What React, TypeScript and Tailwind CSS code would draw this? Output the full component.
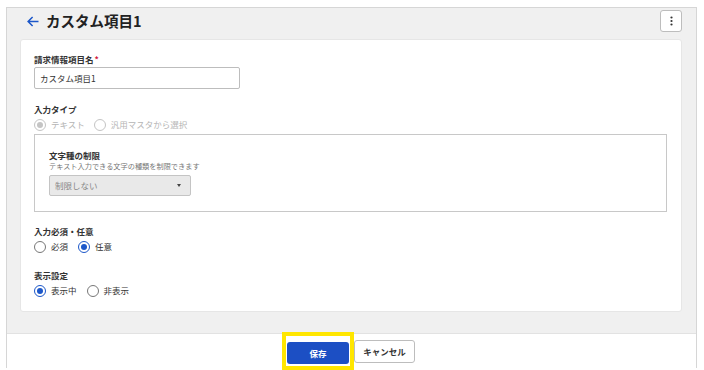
const font = { fontFamily: '"Noto Sans CJK JP", "Noto Sans", sans-serif' }

function Radio({ checked, disabled, label }: { checked?: boolean; disabled?: boolean; label: string }) {
  const ring = disabled ? 'border-[#c4c4c4]' : checked ? 'border-[#1c57c9]' : 'border-[#777]'
  const dot = disabled ? 'bg-[#c4c4c4]' : 'bg-[#1c57c9]'
  return (
    <label className="flex items-center gap-[5px]">
      <span className={`w-[12px] h-[12px] rounded-full border-[1.5px] ${ring} flex items-center justify-center bg-white`}>
        {checked && <span className={`w-[6px] h-[6px] rounded-full ${dot}`} />}
      </span>
      <span className={`text-[8.5px] leading-none ${disabled ? 'text-[#b5b5b5]' : 'text-[#333]'}`}>{label}</span>
    </label>
  )
}

export default function App() {
  return (
    <div className="w-[704px] h-[370px] bg-white pt-[7px] pl-[6px]" style={font}>
      <div className="w-[691px] h-[361px] border border-[#d6d6d6] bg-[#f0f0f0] flex flex-col">
        <div className="shrink-0 h-[31px] flex items-center justify-between pl-[20px] pr-[14px] pb-[5px]">
          <div className="flex items-center gap-[7px]">
            <svg width="12" height="11" viewBox="0 0 12 11" fill="none" stroke="#1c57c9" strokeWidth="1.5">
              <path d="M11.5 5.5H1.2M5.6 1L1.1 5.5 5.6 10" />
            </svg>
            <h1 className="text-[14.5px] font-bold text-[#222] leading-none">カスタム項目1</h1>
          </div>
          <button className="w-[22px] h-[22px] rounded-[3px] border border-[#bdbdbd] bg-white flex items-center justify-center">
            <svg width="3" height="10" viewBox="0 0 3 10" fill="#333">
              <circle cx="1.5" cy="1.5" r="1.1" />
              <circle cx="1.5" cy="5" r="1.1" />
              <circle cx="1.5" cy="8.5" r="1.1" />
            </svg>
          </button>
        </div>

        <div className="shrink-0 ml-[13px] mr-[14px] h-[273px] bg-white border border-[#e6e6e6] rounded-[3px] pl-[13px] pr-[14px] pt-[13px]">
          <div className="text-[8.5px] font-bold text-[#333] leading-[12px]">
            請求情報項目名<span className="ml-[1px] text-[#d2163c]">*</span>
          </div>
          <div className="mt-[2px] w-[206px] h-[22px] border border-[#bdbdbd] rounded-[2px] flex items-center px-[5px] text-[8.5px] text-[#333]">
            カスタム項目1
          </div>

          <div className="mt-[14px] text-[8.5px] font-bold text-[#333] leading-[12px]">入力タイプ</div>
          <div className="mt-[3px] flex items-center gap-[9px] h-[13px]">
            <Radio checked disabled label="テキスト" />
            <Radio disabled label="汎用マスタから選択" />
          </div>
          <div className="mt-[3px] h-[78px] border border-[#c8c8c8] pl-[14px] pt-[14px]">
            <div className="text-[8.5px] font-bold text-[#333] leading-[12px]">文字種の制限</div>
            <div className="text-[7.2px] text-[#777] leading-[11px]">テキスト入力できる文字の種類を制限できます</div>
            <div className="mt-[3px] w-[142px] h-[21px] bg-[#e9e9e9] border border-[#c4c4c4] rounded-[2px] flex items-center justify-between pl-[5px] pr-[9px]">
              <span className="text-[8.5px] text-[#888]">制限しない</span>
              <span className="w-0 h-0 border-l-[2.5px] border-r-[2.5px] border-t-[3px] border-l-transparent border-r-transparent border-t-[#444]" />
            </div>
          </div>

          <div className="mt-[13px] text-[8.5px] font-bold text-[#333] leading-[12px]">入力必須・任意</div>
          <div className="mt-[3px] flex items-center gap-[10px] h-[13px]">
            <Radio label="必須" />
            <Radio checked label="任意" />
          </div>

          <div className="mt-[16px] text-[8.5px] font-bold text-[#333] leading-[12px]">表示設定</div>
          <div className="mt-[3px] flex items-center gap-[10px] h-[13px]">
            <Radio checked label="表示中" />
            <Radio label="非表示" />
          </div>
        </div>

        <div className="mt-[21px] flex-1 bg-white border-t border-[#e2e2e2] flex items-center justify-center">
          <div className="flex items-center -ml-[6px] -mt-[2px]">
            <div className="border-[4px] border-[#ffe600] bg-white px-[1px] py-[2px]">
              <button className="w-[62px] h-[22px] rounded-[3px] bg-[#1c4fc4] text-white text-[8.5px] font-bold">保存</button>
            </div>
            <button className="w-[61px] h-[23px] rounded-[3px] border border-[#bdbdbd] bg-white text-[8.5px] font-bold text-[#333]">キャンセル</button>
          </div>
        </div>
      </div>
    </div>
  )
}
